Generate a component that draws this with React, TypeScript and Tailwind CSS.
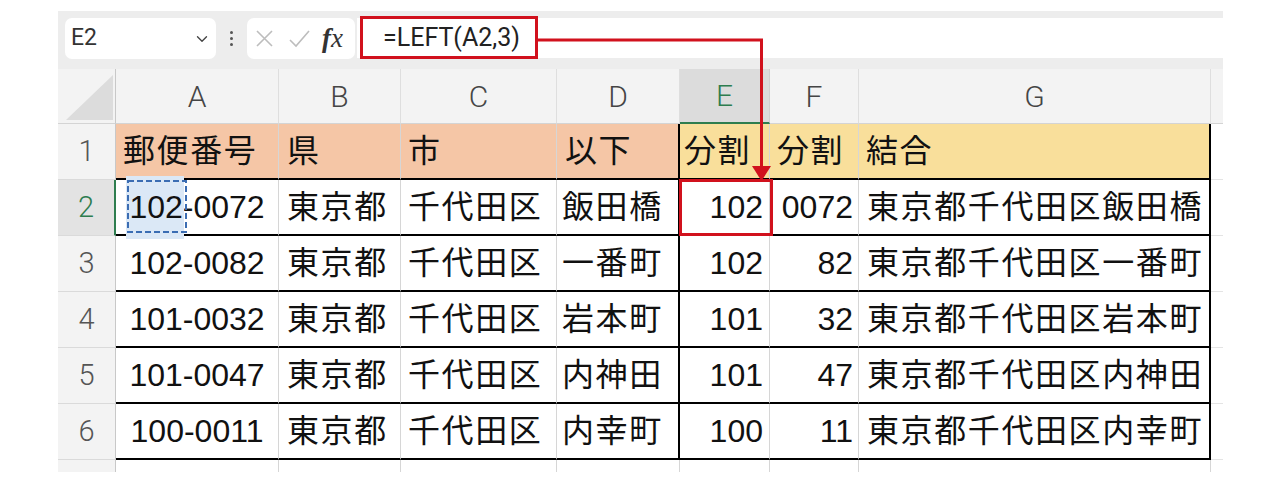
import { ChevronDown } from "lucide-react";

const colW = ["w-[163px]", "w-[122px]", "w-[156px]", "w-[123px]", "w-[90px]", "w-[89px]", "w-[352px]"];
const letters = ["A", "B", "C", "D", "E", "F", "G"];

const bodyAlign = [
  "justify-center",
  "justify-start pl-[8px]",
  "justify-start pl-[7px]",
  "justify-start pl-[5px]",
  "justify-end pr-[6px]",
  "justify-end pr-[5px]",
  "justify-start pl-[8px]",
];

const headAlign = [
  "pl-[7px]",
  "pl-[8px]",
  "pl-[7px]",
  "pl-[8px]",
  "pl-[4px]",
  "pl-[7px]",
  "pl-[7px]",
];

const heading = ["郵便番号", "県", "市", "以下", "分割", "分割", "結合"];

const rows = [
  ["102-0072", "東京都", "千代田区", "飯田橋", "102", "0072", "東京都千代田区飯田橋"],
  ["102-0082", "東京都", "千代田区", "一番町", "102", "82", "東京都千代田区一番町"],
  ["101-0032", "東京都", "千代田区", "岩本町", "101", "32", "東京都千代田区岩本町"],
  ["101-0047", "東京都", "千代田区", "内神田", "101", "47", "東京都千代田区内神田"],
  ["100-0011", "東京都", "千代田区", "内幸町", "100", "11", "東京都千代田区内幸町"],
];

// right border of D and G is the black frame around E:G
function edge(i: number) {
  if (i === 3 || i === 6) return "border-r-2 border-r-black";
  return "border-r border-r-[#d6d6d6]";
}

function RowHead({ n, active }: { n: number; active?: boolean }) {
  return (
    <div
      className={`flex h-[56px] w-[58px] shrink-0 items-center justify-center border-b border-b-[#dadada] text-[29px] font-light ${
        active
          ? "border-r-2 border-r-[#2e7d4f] bg-[#e3e3e3] text-[#2e7d4f]"
          : "border-r border-r-[#c8c8c8] bg-[#f3f3f3] text-[#555]"
      }`}
      style={{ fontFamily: "Roboto, sans-serif" }}
    >
      {n}
    </div>
  );
}

export default function App() {
  return (
    <div
      className="relative h-[485px] w-[1280px] overflow-hidden bg-white"
      style={{ fontFamily: '"Liberation Sans", "Noto Sans CJK JP", sans-serif' }}
    >
      <div className="ml-[58px] mt-[11px] flex w-[1165px] flex-col">
        {/* formula bar */}
        <div className="flex h-[58px] items-start bg-[#ededed] pt-[7px]">
          <div className="ml-[7px] flex h-[41px] w-[151px] items-center justify-between rounded-[7px] bg-white pl-[6px] pr-[5px]">
            <span className="text-[23px] text-[#333]" style={{ fontFamily: "Roboto, sans-serif" }}>
              E2
            </span>
            <ChevronDown size={18} strokeWidth={1.8} className="text-[#444]" />
          </div>
          <div className="flex h-[41px] w-[31px] flex-col items-center justify-center gap-[3px]">
            <span className="h-[3px] w-[3px] rounded-full bg-[#555]" />
            <span className="h-[3px] w-[3px] rounded-full bg-[#555]" />
            <span className="h-[3px] w-[3px] rounded-full bg-[#555]" />
          </div>
          <div className="flex h-[41px] w-[108px] items-center rounded-[7px] bg-white pl-[8px]">
            <svg width="19" height="19" viewBox="0 0 19 19" className="mr-[14px]">
              <path d="M2 2 L17 17 M17 2 L2 17" stroke="#bdbdbd" strokeWidth="1.6" fill="none" />
            </svg>
            <svg width="23" height="19" viewBox="0 0 23 19" className="mr-[11px]">
              <path d="M2 11 L8 17 L21 2" stroke="#bdbdbd" strokeWidth="1.6" fill="none" />
            </svg>
            <span className="text-[27px] italic leading-none text-[#333]" style={{ fontFamily: '"Liberation Serif", serif' }}>
              <span className="font-bold">f</span>x
            </span>
          </div>
          <div className="ml-[2px] flex h-[40px] flex-1 items-center bg-white pl-[26px]">
            <span className="text-[25px] text-[#222]" style={{ fontFamily: "Roboto, sans-serif" }}>
              =LEFT(A2,3)
            </span>
          </div>
        </div>

        {/* column headers */}
        <div className="flex h-[55px] bg-[#f3f3f3]">
          <div className="flex w-[58px] shrink-0 items-end justify-end border-r border-r-[#c8c8c8] border-b border-b-[#d4d4d4] pb-[3px] pr-[2px]">
            <svg width="47" height="45" viewBox="0 0 47 45">
              <polygon points="47,0 47,45 0,45" fill="#dcdcdc" />
            </svg>
          </div>
          {letters.map((l, i) => (
            <div
              key={l}
              className={`flex shrink-0 items-center justify-center text-[30px] font-light ${colW[i]} ${
                i === 4
                  ? "border-b-2 border-b-[#2e7d4f] border-r border-r-[#d0d0d0] bg-[#dcdcdc] text-[#2e7d4f]"
                  : "border-b border-b-[#d4d4d4] border-r border-r-[#dedede] text-[#454545]"
              }`}
              style={{ fontFamily: "Roboto, sans-serif" }}
            >
              {l}
            </div>
          ))}
          <div className="w-[12px] border-b border-b-[#d4d4d4]" />
        </div>

        {/* row 1 */}
        <div className="flex text-[32px] text-[#111]">
          <RowHead n={1} />
          {heading.map((h, i) => (
            <div
              key={i}
              className={`flex h-[56px] shrink-0 items-center border-b-2 border-b-black tracking-[0.05em] ${colW[i]} ${headAlign[i]} ${edge(i)} ${
                i < 4 ? "bg-[#f5c6a6]" : "bg-[#f9df9b]"
              }`}
            >
              {h}
            </div>
          ))}
          <div className="h-[56px] w-[12px] border-b border-b-[#e4e4e4]" />
        </div>

        {rows.map((r, ri) => (
          <div key={ri} className="flex text-[32px] text-[#111]">
            <RowHead n={ri + 2} active={ri === 0} />
            {r.map((c, i) => (
              <div
                key={i}
                className={`flex h-[56px] shrink-0 items-center border-b-2 border-b-black bg-white ${
                  /^[0-9-]+$/.test(c) ? "" : "tracking-[0.05em]"
                } ${colW[i]} ${bodyAlign[i]} ${edge(i)}`}
              >
                {ri === 0 && i === 0 ? (
                  <span>
                    <span className="relative">
                      <span className="absolute -bottom-[14px] -left-[3px] -right-[1px] -top-[13px] bg-[#dbe8f6]" />
                      <span className="relative">102</span>
                    </span>
                    -0072
                  </span>
                ) : (
                  c
                )}
              </div>
            ))}
            <div className="h-[56px] w-[12px] border-b border-b-[#e4e4e4]" />
          </div>
        ))}

        {/* partial row 7 */}
        <div className="flex h-[12px]">
          <div className="w-[58px] shrink-0 border-r border-r-[#c8c8c8] bg-[#f3f3f3]" />
          {colW.map((w, i) => (
            <div key={i} className={`shrink-0 border-r border-r-[#d6d6d6] ${w}`} />
          ))}
        </div>
      </div>

      {/* callout overlay: formula box, arrow and target cell */}
      <svg className="pointer-events-none absolute left-0 top-0" width="1280" height="485" viewBox="0 0 1280 485">
        <rect x="128" y="181" width="58" height="51" fill="none" stroke="#3b6db3" strokeWidth="2" strokeDasharray="6 3" />
        <rect x="361.5" y="17.5" width="175" height="40" fill="none" stroke="#d1111d" strokeWidth="3" />
        <path d="M538 40 H761.5 V168" fill="none" stroke="#d1111d" strokeWidth="3" />
        <polygon points="752,166 771,166 761.5,181" fill="#d1111d" />
        <rect x="680.5" y="180.5" width="91" height="54" fill="none" stroke="#d1111d" strokeWidth="3" />
      </svg>
    </div>
  );
}
